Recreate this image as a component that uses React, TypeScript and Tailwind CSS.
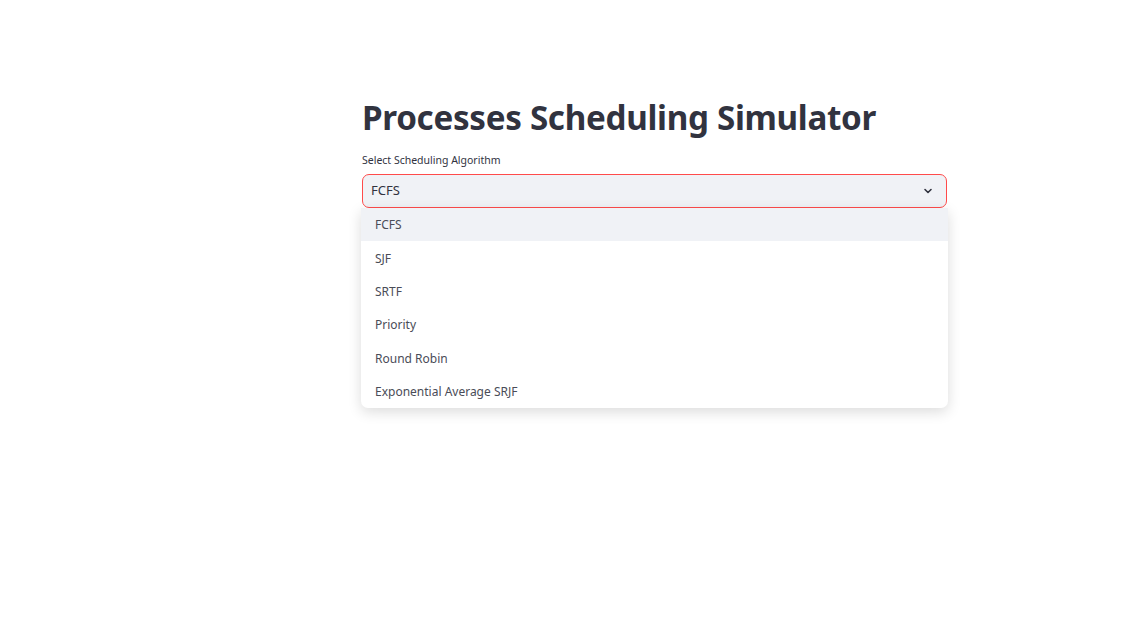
import React, { useState } from 'react';

const options = ['FCFS', 'SJF', 'SRTF', 'Priority', 'Round Robin', 'Exponential Average SRJF'];

export default function App() {
  const [selected] = useState('FCFS');

  return (
    <div className="min-h-[618px] bg-white font-['Noto_Sans',sans-serif] text-[#31333f]">
      <div className="pl-[362px] pt-[94px] w-[947px]">
        <h1 className="text-[33.2px] leading-[48px] font-bold tracking-[-0.3px]">
          Processes Scheduling Simulator
        </h1>
        <label className="block mt-[12px] text-[10.5px] leading-[13px]">Select Scheduling Algorithm</label>
        <div className="relative mt-[7px]">
          <div className="flex items-center justify-between h-[34px] px-[8px] rounded-[7px] border border-[#ff4b4b] bg-[#f0f2f6] text-[13px]">
            <span>{selected}</span>
            <svg width="12" height="12" viewBox="0 0 24 24" fill="none" stroke="#31333f" strokeWidth="3.2" strokeLinecap="round" strokeLinejoin="round" className="mr-[4px]">
              <path d="M6 9l6 6 6-6" />
            </svg>
          </div>
          <ul className="absolute left-[-1px] right-[-1px] top-[34px] bg-white rounded-b-[7px] shadow-[0_4px_14px_rgba(0,0,0,0.14)] overflow-hidden">
            {options.map((o) => (
              <li
                key={o}
                className={`h-[33.4px] flex items-center pl-[14px] pt-[1px] text-[12px] text-[#4a4c57] ${o === selected ? 'bg-[#f0f2f6]' : ''}`}
              >
                {o}
              </li>
            ))}
          </ul>
        </div>
      </div>
    </div>
  );
}
